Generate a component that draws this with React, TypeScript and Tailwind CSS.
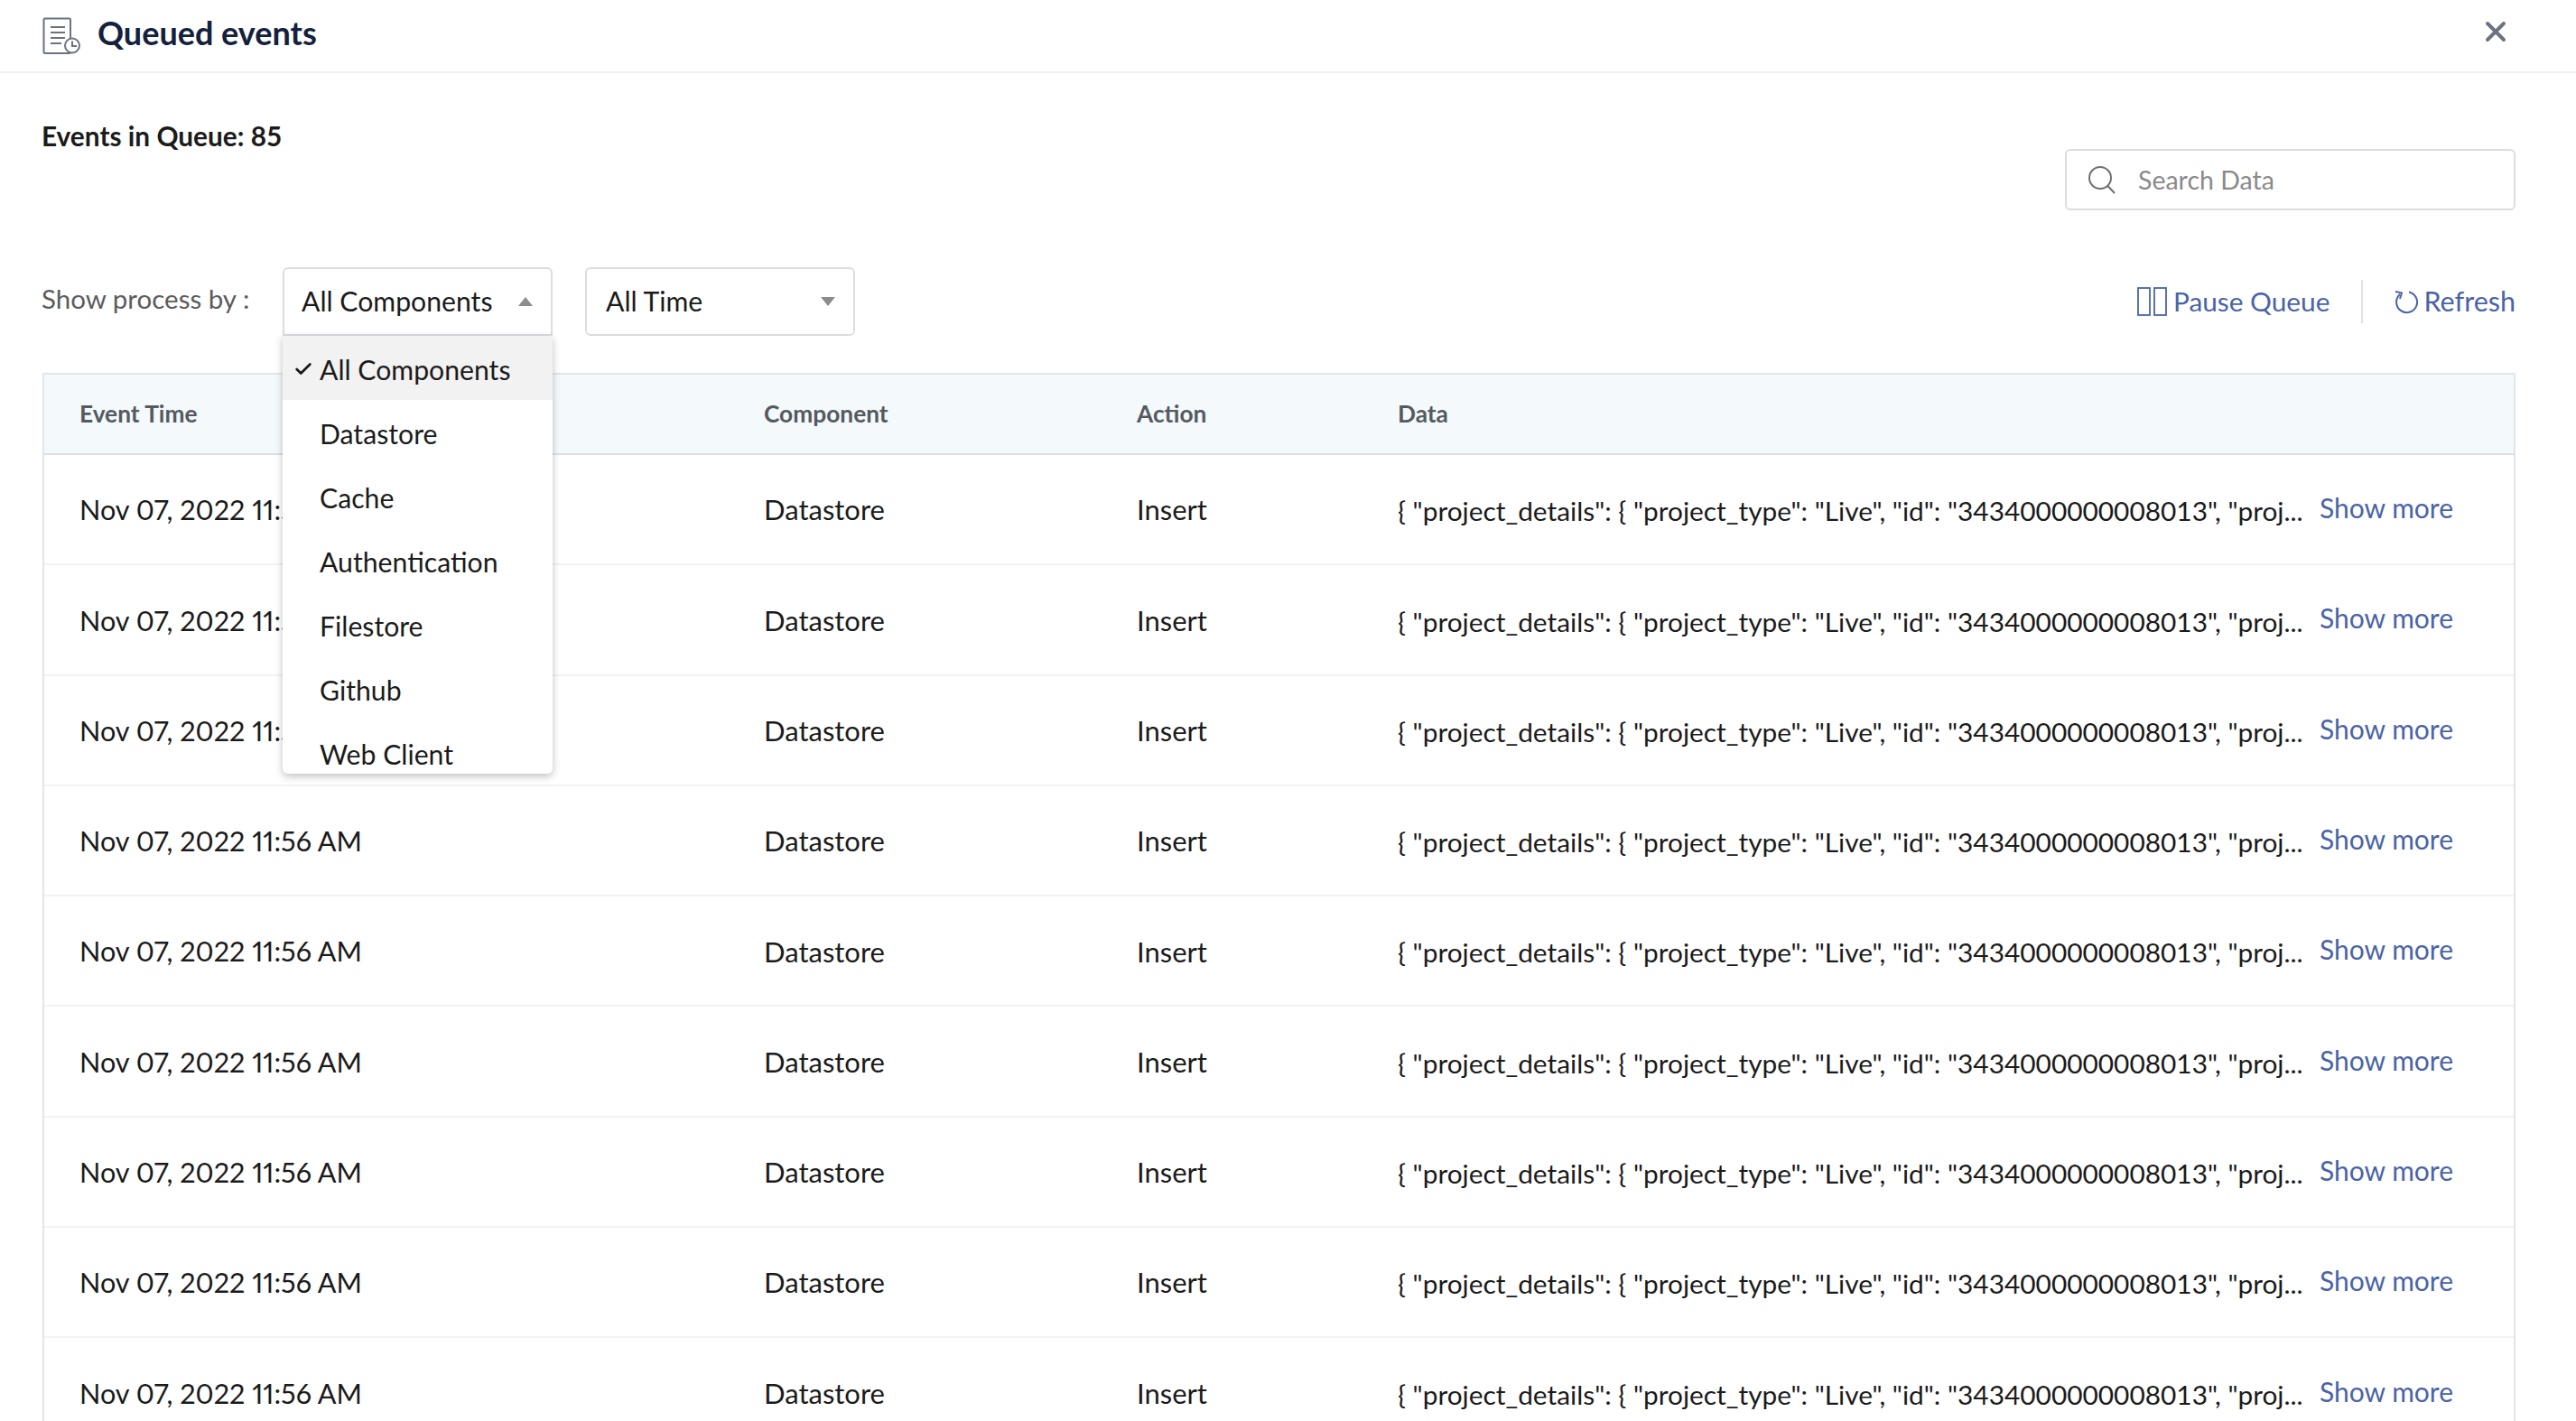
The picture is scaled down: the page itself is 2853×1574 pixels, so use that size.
import React from 'react';
import { Check, X } from 'lucide-react';

const ROW_COUNT = 9;
const DATA_TEXT =
  '{ "project_details": { "project_type": "Live", "id": "3434000000008013", "proj...';
const OPTIONS = ['All Components', 'Datastore', 'Cache', 'Authentication', 'Filestore', 'Github', 'Web Client'];

const Triangle = ({ up }: { up?: boolean }) => (
  <svg width="16" height="12" viewBox="0 0 16 12" className="shrink-0">
    <path d={up ? 'M8 1 L16 11 L0 11 Z' : 'M0 1 L16 1 L8 11 Z'} fill="#8c8c8c" />
  </svg>
);

const QueueIcon = () => (
  <svg width="42" height="42" viewBox="0 0 42 42" fill="none" stroke="#6b7280" strokeWidth="2" className="shrink-0">
    <rect x="1.5" y="1.5" width="29.5" height="38.5" rx="1.5" />
    <path d="M9 11 H25 M9 17 H25 M9 23 H25 M9 29 H21" />
    <circle cx="33" cy="31.5" r="8" fill="#ffffff" />
    <path d="M33 26.5 V32 H38" />
  </svg>
);

const PauseIcon = () => (
  <svg width="33" height="32" viewBox="0 0 33 32" fill="none" stroke="#4a63a8" strokeWidth="1.8" className="shrink-0">
    <rect x="1" y="1" width="13" height="30" />
    <rect x="19" y="1" width="13" height="30" />
  </svg>
);

const RefreshIcon = () => (
  <svg width="26" height="28" viewBox="0 0 26 28" fill="none" stroke="#4a63a8" strokeWidth="2" className="shrink-0">
    <path d="M6 6 A11.5 11.5 0 1 0 16 3.4" />
    <path d="M1 3 L8 4.5 L6 11" />
  </svg>
);

const SearchIcon = () => (
  <svg width="32" height="32" viewBox="0 0 32 32" fill="none" stroke="#6f6f6f" strokeWidth="2" className="shrink-0">
    <circle cx="14" cy="14" r="12" />
    <path d="M22.5 23 L30 31" />
  </svg>
);

const TableRow = () => (
  <div className="grid h-[122.3px] grid-cols-[797px_413px_289px_1021px_1fr] items-center border-b-2 border-[#f1f2f4] pt-[1px] text-[31px] text-[#1b1b1b]">
    <div className="pl-[39px] pt-[1px] text-[30.6px] whitespace-nowrap [font-variant-numeric:proportional-nums]">Nov 07, 2022 11:56 AM</div>
    <div>Datastore</div>
    <div>Insert</div>
    <div className="pt-[4px] text-[29.85px] whitespace-nowrap">{DATA_TEXT}</div>
    <div className="pb-[4px] text-[30px] text-[#4a63a8] whitespace-nowrap">Show more</div>
  </div>
);

export default function App() {
  return (
    <div className="relative h-[1574px] w-[2853px] overflow-hidden bg-white font-[Lato,sans-serif]">
      <header className="flex h-[81px] items-center justify-between border-b-2 border-[#f0f1f3] pl-[47px] pr-[71px]">
        <div className="flex items-center gap-[19px]">
          <QueueIcon />
          <h1 className="pb-[8px] text-[36px] font-bold text-[#14213d]">Queued events</h1>
        </div>
        <button className="pb-[9px] text-[#6b7280]">
          <X size={36} strokeWidth={2.6} />
        </button>
      </header>

      <div className="flex items-start justify-between pl-[46px] pr-[67px] pt-[50px]">
        <div className="text-[29.8px] font-bold leading-[40px] text-[#1b1b1b]">Events in Queue: 85</div>
        <div className="mt-[34px] flex h-[68px] w-[499px] items-center gap-[24px] rounded-[6px] border-2 border-[#dcdde0] pl-[23px]">
          <SearchIcon />
          <span className="text-[28.5px] text-[#8a8a8a]">Search Data</span>
        </div>
      </div>

      <div className="flex items-center justify-between pl-[46px] pr-[67px] pt-[63px]">
        <div className="flex items-center">
          <span className="w-[267px] pb-[6px] text-[29.5px] text-[#5c5c5c]">Show process by :</span>
          <div className="relative">
            <div className="flex h-[76px] w-[299px] items-center justify-between rounded-t-[6px] border-2 border-[#dcdde0] pl-[19px] pr-[20px] text-[30.2px] text-[#1b1b1b]">
              All Components
              <Triangle up />
            </div>
            {/* open dropdown lies over the table */}
            <ul className="absolute left-0 top-[76px] z-10 h-[485px] w-[299px] overflow-hidden rounded-b-[6px] bg-white text-[30.2px] text-[#1b1b1b] shadow-[0_3px_8px_rgba(0,0,0,0.25)]">
              {OPTIONS.map((o, i) => (
                <li
                  key={o}
                  className={`relative flex h-[71px] items-center pl-[41px] pt-[4px] ${i === 0 ? 'bg-[#f2f2f2]' : ''}`}
                >
                  {i === 0 && <Check size={22} strokeWidth={3} className="absolute left-[12px] top-[26px]" />}
                  {o}
                </li>
              ))}
            </ul>
          </div>
          <div className="ml-[36px] flex h-[76px] w-[299px] items-center justify-between rounded-[6px] border-2 border-[#dcdde0] pl-[21px] pr-[20px] text-[30.2px] text-[#1b1b1b]">
            All Time
            <Triangle />
          </div>
        </div>
        <div className="flex items-center text-[30.5px] text-[#4a63a8]">
          <PauseIcon />
          <span className="ml-[7px] text-[29.8px]">Pause Queue</span>
          <span className="mx-[35px] h-[48px] w-[2px] bg-[#e0e1e4]" />
          <RefreshIcon />
          <span className="ml-[6px]">Refresh</span>
        </div>
      </div>

      <div className="ml-[47px] mt-[41px] w-[2739px] border-x-2 border-t-2 border-[#e4e5e8]">
        <div className="grid h-[89px] grid-cols-[797px_413px_289px_1fr] items-center border-b-2 border-[#dfe0e3] bg-[#f4f9fc] text-[26.3px] font-bold text-[#555a60]">
          <div className="pl-[39px]">Event Time</div>
          <div>Component</div>
          <div>Action</div>
          <div>Data</div>
        </div>
        {Array.from({ length: ROW_COUNT }, (_, i) => (
          <TableRow key={i} />
        ))}
      </div>
    </div>
  );
}
